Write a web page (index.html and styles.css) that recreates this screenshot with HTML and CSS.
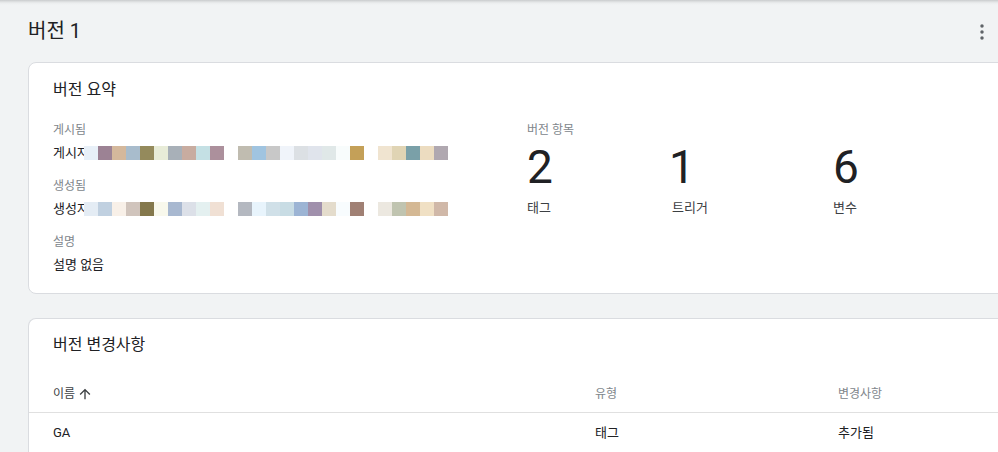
FILE: index.html
```html
<!DOCTYPE html>
<html lang="ko">
<head>
<meta charset="utf-8">
<title>버전 1</title>
<link rel="stylesheet" href="styles.css">
</head>
<body>
<div class="appbar-shadow"></div>
<main class="page">
  <header class="page-header">
    <h1 class="page-title">버전 1</h1>
    <button class="icon-btn" aria-label="더보기">
      <svg viewBox="0 0 24 24" width="24" height="24"><circle cx="12" cy="6" r="1.75"/><circle cx="12" cy="12" r="1.75"/><circle cx="12" cy="18" r="1.75"/></svg>
    </button>
  </header>

  <section class="card summary-card">
    <h2 class="card-title">버전 요약</h2>
    <div class="summary-body">
      <div class="meta">
        <div class="meta-group">
          <div class="label">게시됨</div>
          <div class="value pix-row"><span>게시자</span><span class="pix pix-a"></span></div>
        </div>
        <div class="meta-group">
          <div class="label">생성됨</div>
          <div class="value pix-row"><span>생성자</span><span class="pix pix-b"></span></div>
        </div>
        <div class="meta-group">
          <div class="label">설명</div>
          <div class="value">설명 없음</div>
        </div>
      </div>
      <div class="items">
        <div class="label">버전 항목</div>
        <div class="item-grid">
          <div class="item"><div class="num">2</div><div class="item-label">태그</div></div>
          <div class="item"><div class="num num-one">1</div><div class="item-label">트리거</div></div>
          <div class="item"><div class="num">6</div><div class="item-label">변수</div></div>
        </div>
      </div>
    </div>
  </section>

  <section class="card changes-card">
    <h2 class="card-title">버전 변경사항</h2>
    <div class="table">
      <div class="tr thead">
        <div class="td col-name sorted">이름
          <svg class="sort-icon" viewBox="0 0 24 24" width="16" height="16"><path d="M4 12l1.41 1.41L11 7.83V20h2V7.83l5.58 5.59L20 12l-8-8-8 8z"/></svg>
        </div>
        <div class="td col-type">유형</div>
        <div class="td col-change">변경사항</div>
      </div>
      <div class="tr tbody-row">
        <div class="td col-name">GA</div>
        <div class="td col-type">태그</div>
        <div class="td col-change">추가됨</div>
      </div>
    </div>
  </section>
</main>
</body>
</html>
```

FILE: styles.css
```css
* { box-sizing: border-box; }

html, body {
  margin: 0;
  padding: 0;
}

body {
  width: 998px;
  height: 452px;
  overflow: hidden;
  background: #f1f3f4;
  font-family: "Roboto", "Noto Sans CJK KR", sans-serif;
  color: #202124;
  position: relative;
}

.appbar-shadow {
  position: absolute;
  top: 0;
  left: 0;
  right: 0;
  height: 5px;
  background: linear-gradient(to bottom, #c9cbcd 0, #dcdedf 1.5px, #ebedee 3px, #f1f3f4 5px);
}

.page {
  padding-left: 28px;
  height: 452px;
  overflow: hidden;
}

.page-header {
  display: flex;
  align-items: center;
  justify-content: space-between;
  padding: 17px 4px 17px 0;
}

.page-title {
  margin: 0;
  font-size: 20px;
  line-height: 28px;
  font-weight: 400;
  color: #202124;
}

.icon-btn {
  border: 0;
  padding: 0;
  margin: 0;
  background: none;
  width: 24px;
  height: 24px;
  display: flex;
  margin-top: 1px;
}

.icon-btn svg {
  fill: #5f6368;
}

.card {
  background: #fff;
  border: 1px solid #dadce0;
  border-radius: 8px;
  margin-right: -40px;
}

.card-title {
  margin: 0;
  font-size: 16px;
  line-height: 24px;
  font-weight: 400;
  color: #202124;
}

.summary-card {
  padding: 15px 24px 18px 24px;
}

.summary-body {
  display: flex;
  margin-top: 20px;
}

.meta {
  width: 474px;
  display: flex;
  flex-direction: column;
  gap: 15px;
}

.label {
  font-size: 12px;
  line-height: 16px;
  color: #80868b;
}

.value {
  margin-top: 5px;
  font-size: 13px;
  line-height: 20px;
  color: #202124;
}

.pix-row {
  display: flex;
  align-items: center;
}

.pix {
  display: block;
  width: 364px;
  height: 14px;
  margin-left: -5px;
}

.pix-a {
  background: linear-gradient(to right,
    #e8f0f8 0 14px, #9c8294 14px 28px, #d4b89c 28px 42px, #a8bccc 42px 56px,
    #948a5c 56px 70px, #e8ecd8 70px 84px, #a8b0b8 84px 98px, #c8aca0 98px 112px,
    #c4e0e4 112px 126px, #ac909c 126px 140px, #ffffff 140px 154px, #c0bcb0 154px 168px,
    #a0c4e0 168px 182px, #c8c8c8 182px 196px, #f0f4fa 196px 210px, #dce0e4 210px 224px,
    #e0e4ec 224px 238px, #e0e8e8 238px 252px, #f8fcfc 252px 266px, #c4a058 266px 280px,
    #ffffff 280px 294px, #f0e4d0 294px 308px, #e0d4b4 308px 322px, #7aa0a8 322px 336px,
    #ecdcc0 336px 350px, #b0a8b0 350px 364px);
}

.pix-b {
  background: linear-gradient(to right,
    #e4ecf4 0 14px, #c0d0e0 14px 28px, #f8f0e8 28px 42px, #d0c4bc 42px 56px,
    #84784c 56px 70px, #f8f8ec 70px 84px, #a8b8d0 84px 98px, #dce0e8 98px 112px,
    #e4f0f0 112px 126px, #f0e0d4 126px 140px, #ffffff 140px 154px, #b4b8c0 154px 168px,
    #e8f4fc 168px 182px, #d0e0e8 182px 196px, #c8dce4 196px 210px, #9cb4d4 210px 224px,
    #a090ac 224px 238px, #e4dccc 238px 252px, #f8fcfe 252px 266px, #a08074 266px 280px,
    #ffffff 280px 294px, #ece8e0 294px 308px, #c0c4b0 308px 322px, #d4b894 322px 336px,
    #f0e0c4 336px 350px, #d0b8a8 350px 364px);
}

.items {
  display: flex;
  flex-direction: column;
}

.item-grid {
  display: grid;
  grid-template-columns: 145px 161px 120px;
  margin-top: 3px;
}

.num {
  font-family: "Roboto", sans-serif;
  font-size: 46px;
  line-height: 52px;
  font-weight: 400;
  color: #202124;
}

.num-one {
  margin-left: -3px;
}

.item-label {
  margin-top: 5px;
  font-size: 13px;
  line-height: 20px;
  color: #3c4043;
}

.changes-card {
  margin-top: 24px;
  padding-top: 14px;
  border-bottom-width: 0;
  border-bottom-left-radius: 0;
  border-bottom-right-radius: 0;
}

.changes-card .card-title {
  padding-left: 24px;
}

.table {
  margin-top: 15px;
}

.tr {
  display: grid;
  grid-template-columns: 566px 243px 1fr;
}

.thead {
  border-bottom: 1px solid #e0e0e0;
}

.thead .td {
  padding-top: 14px;
  padding-bottom: 10px;
  font-size: 12px;
  line-height: 16px;
  color: #80868b;
  display: flex;
  align-items: center;
}

.thead .sorted {
  color: #3c4043;
}

.sort-icon {
  fill: #3c4043;
  margin-left: 2px;
}

.tbody-row .td {
  padding-top: 10px;
  padding-bottom: 9px;
  font-size: 13px;
  line-height: 20px;
  color: #202124;
}

.tr .col-name {
  padding-left: 24px;
}
```
